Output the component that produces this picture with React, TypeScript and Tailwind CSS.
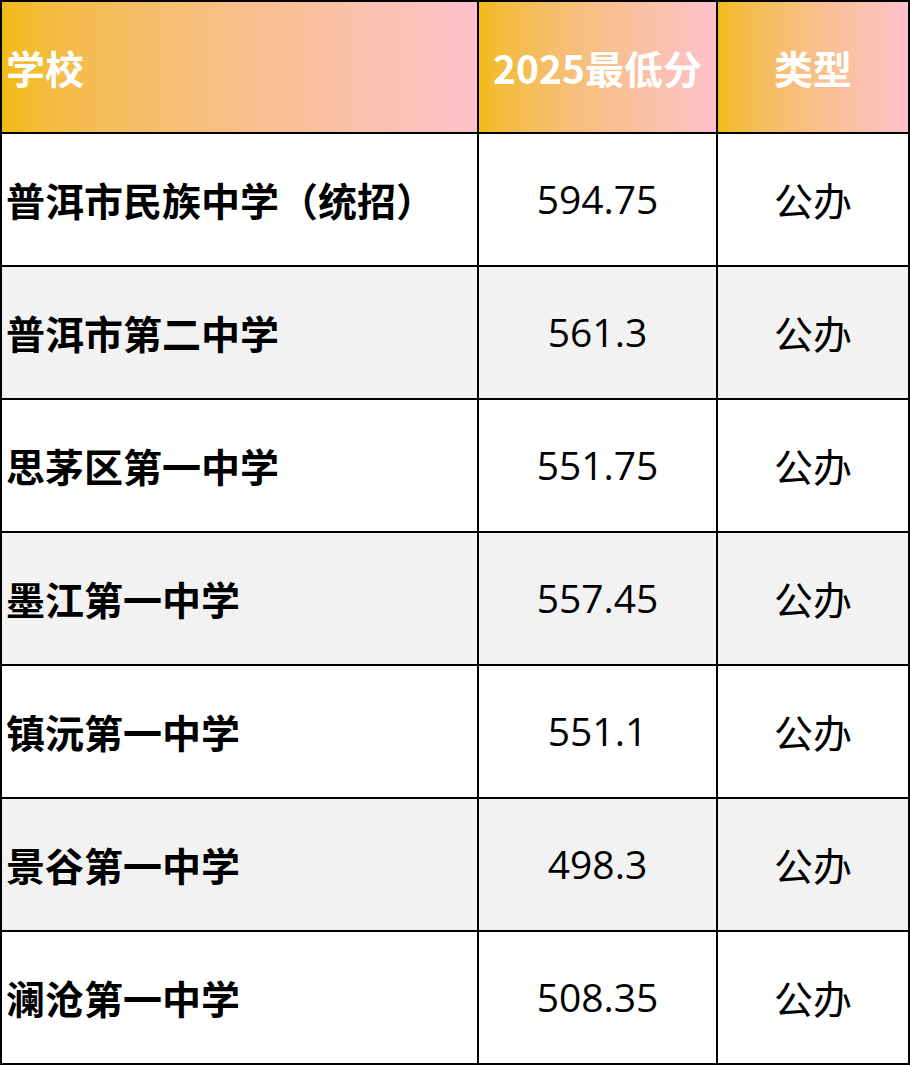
import React from "react";

const rows: [string, string, string][] = [
  ["普洱市民族中学（统招）", "594.75", "公办"],
  ["普洱市第二中学", "561.3", "公办"],
  ["思茅区第一中学", "551.75", "公办"],
  ["墨江第一中学", "557.45", "公办"],
  ["镇沅第一中学", "551.1", "公办"],
  ["景谷第一中学", "498.3", "公办"],
  ["澜沧第一中学", "508.35", "公办"],
];

export default function App() {
  const head =
    "h-[132px] border-r-2 border-b-2 border-black bg-linear-to-r from-[#f2bb12] to-[#ffc1cb] flex items-center text-white font-bold text-[39px] font-['Noto_Sans_CJK_SC','Noto_Sans',sans-serif]";
  return (
    <div className="w-[910px] h-[1065px] bg-white">
      <div className="grid grid-cols-[477px_239px_192px] border-l-2 border-t-2 border-black">
        <div className={head + " pl-[4px]"}>学校</div>
        <div className={head + " justify-center"}>2025最低分</div>
        <div className={head + " justify-center"}>类型</div>
        {rows.map((r, i) => {
          const bg = i % 2 === 1 ? "bg-[#f2f2f2]" : "bg-white";
          const cell = `h-[133px] border-r-2 border-b-2 border-black flex items-center text-black text-[39px] ${bg}`;
          return (
            <React.Fragment key={i}>
              <div className={cell + " pl-[4px] font-bold font-['Noto_Sans_CJK_SC','Noto_Sans',sans-serif]"}>
                {r[0]}
              </div>
              <div className={cell + " justify-center font-['Open_Sans','Noto_Sans_CJK_SC',sans-serif]"}>
                {r[1]}
              </div>
              <div className={cell + " justify-center font-['Noto_Sans_CJK_SC','Noto_Sans',sans-serif]"}>
                {r[2]}
              </div>
            </React.Fragment>
          );
        })}
      </div>
    </div>
  );
}
